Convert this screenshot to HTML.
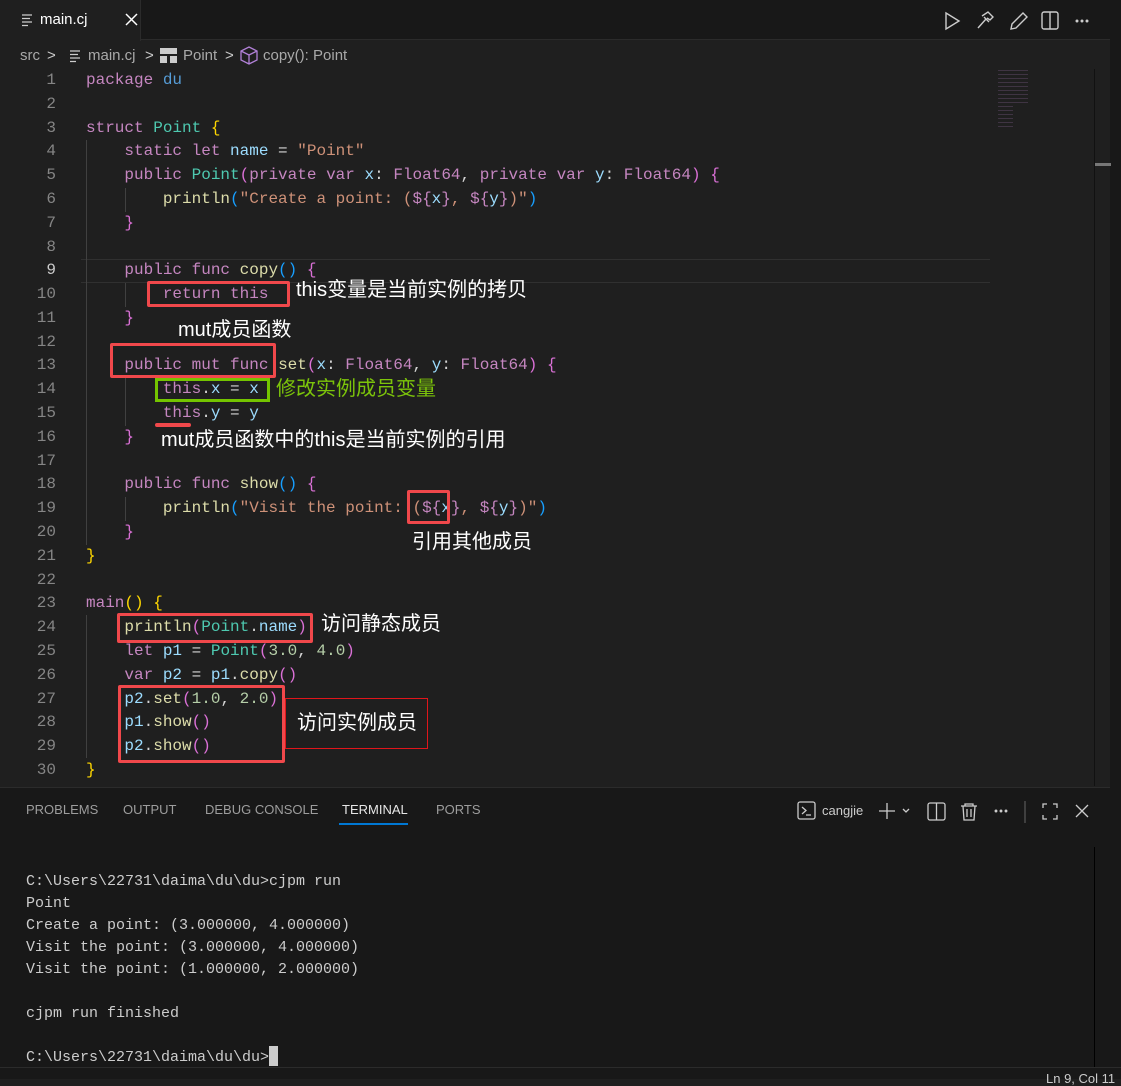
<!DOCTYPE html>
<html><head><meta charset="utf-8"><style>
*{margin:0;padding:0;box-sizing:border-box}
body{width:1121px;height:1079px;background:#1f1f1f;position:relative;overflow:hidden;font-family:"Liberation Sans",sans-serif;color:#ccc}
.abs{position:absolute}
.ln{position:absolute;left:0;width:56px;text-align:right;color:#858585;font-size:16px;font-family:"Liberation Mono",monospace;height:24px;line-height:24px}
.cl{position:absolute;left:86px;white-space:pre;font-size:16px;font-family:"Liberation Mono",monospace;height:24px;line-height:24px;color:#d4d4d4}
.k{color:#c586c0}.t{color:#4ec9b0}.v{color:#9cdcfe}.s{color:#ce9178}.f{color:#dcdcaa}.y{color:#ffd700}.p{color:#da70d6}.b{color:#179fff}.n{color:#b5cea8}.ty{color:#c586c0}
.box{position:absolute;border:3px solid #f0484b;border-radius:2px}
.ann{position:absolute;color:#fff;font-size:20px;font-family:"Liberation Sans","Noto Sans CJK SC",sans-serif;white-space:nowrap;line-height:24px}
.g{position:absolute;width:1px;background:#404040}
.tab{position:absolute;top:802px;font-size:13px;color:#9d9d9d}
.term{position:absolute;left:26px;font-size:15px;font-family:"Liberation Mono",monospace;color:#ccc;white-space:pre;line-height:22px}
.bc{position:absolute;top:47px;font-size:15px;color:#a9a9a9;white-space:nowrap;line-height:18px}
</style></head><body>
<div class="abs" style="left:0;top:0;width:1121px;height:40px;background:#181818;border-bottom:1px solid #2b2b2b"></div>
<div class="abs" style="left:0;top:0;width:141px;height:41px;background:#1f1f1f;border-right:1px solid #2b2b2b"></div>
<svg class="abs" style="left:21px;top:13px" width="14" height="14" stroke="#ccc" stroke-width="1.2"><path d="M1 2H11M1 5.5H9M1 9H11M1 12.5H7"/></svg>
<div class="abs" style="left:40px;top:11px;font-size:15px;color:#fff">main.cj</div>
<svg class="abs" style="left:124px;top:12px" width="16" height="16" stroke="#fff" stroke-width="1.5"><path d="M2 2L13 13M13 2L2 13"/></svg>
<svg class="abs" style="left:940px;top:8px" width="160" height="26" fill="none" stroke="#ccc" stroke-width="1.4">
<path d="M6 5 L19 13 L6 21 Z"/>
<path d="M38 20 L46 11 M42 8 L48 4 L53 9 L50 12 L47 10 M44 9 L49 14"/>
<path d="M71 21 L72 16 L83 5 L87 9 L76 20 Z"/>
<rect x="102" y="4" width="16" height="17" rx="2"/><path d="M110 4 V21"/>
<circle cx="137" cy="13" r=".8" fill="#ccc"/><circle cx="142" cy="13" r=".8" fill="#ccc"/><circle cx="147" cy="13" r=".8" fill="#ccc"/>
</svg>
<div class="abs" style="left:1110px;top:0;width:11px;height:1079px;background:#181818"></div>
<!-- breadcrumb -->
<div class="bc" style="left:20px">src</div>
<div class="bc" style="left:47px;color:#ccc">&gt;</div>
<svg class="abs" style="left:69px;top:49px" width="14" height="14" stroke="#ccc" stroke-width="1.2"><path d="M1 2H11M1 5.5H9M1 9H11M1 12.5H7"/></svg>
<div class="bc" style="left:88px">main.cj</div>
<div class="bc" style="left:145px;color:#ccc">&gt;</div>
<svg class="abs" style="left:159px;top:47px" width="20" height="18"><rect x="1" y="1" width="17" height="6" fill="#ccc"/><rect x="1" y="9" width="7" height="7" fill="#ccc"/><rect x="11" y="9" width="7" height="7" fill="#ccc"/></svg>
<div class="bc" style="left:183px">Point</div>
<div class="bc" style="left:225px;color:#ccc">&gt;</div>
<svg class="abs" style="left:240px;top:46px" width="20" height="20" fill="none" stroke="#b180d7" stroke-width="1.3"><path d="M9 1 L17 5 V14 L9 18 L1 14 V5 Z M1 5 L9 9 L17 5 M9 9 V18"/></svg>
<div class="bc" style="left:263px">copy(): Point</div>
<!-- scrollbar -->
<div class="abs" style="left:1094px;top:69px;width:1px;height:717px;background:#111"></div>
<div class="abs" style="left:1095px;top:163px;width:16px;height:3px;background:#777"></div>
<div class="abs" style="left:998px;top:70px;width:50px;height:60px;opacity:.35;background:repeating-linear-gradient(#7a5a86 0 1px,transparent 1px 4px);clip-path:polygon(0 0,60% 0,60% 60%,30% 60%,30% 100%,0 100%)"></div>
<div class="abs" style="left:81px;top:259px;width:909px;height:24px;border-top:1px solid #303030;border-bottom:1px solid #303030"></div>
<div class="g" style="left:86px;top:140px;height:405px"></div>
<div class="g" style="left:125px;top:188px;height:24px"></div>
<div class="g" style="left:125px;top:283px;height:24px"></div>
<div class="g" style="left:125px;top:378px;height:48px"></div>
<div class="g" style="left:125px;top:497px;height:24px"></div>
<div class="g" style="left:86px;top:615px;height:143px"></div>

<div class="ln" style="top:68px">1</div><div class="cl" style="top:68px"><span class="k">package</span> <span class="v" style="color:#569cd6">du</span></div>
<div class="ln" style="top:92px">2</div>
<div class="ln" style="top:116px">3</div><div class="cl" style="top:116px"><span class="k">struct</span> <span class="t">Point</span> <span class="y">{</span></div>
<div class="ln" style="top:139px">4</div><div class="cl" style="top:139px">    <span class="k">static</span> <span class="k">let</span> <span class="v">name</span> = <span class="s">"Point"</span></div>
<div class="ln" style="top:163px">5</div><div class="cl" style="top:163px">    <span class="k">public</span> <span class="t">Point</span><span class="p">(</span><span class="k">private</span> <span class="k">var</span> <span class="v">x</span>: <span class="ty">Float64</span>, <span class="k">private</span> <span class="k">var</span> <span class="v">y</span>: <span class="ty">Float64</span><span class="p">)</span> <span class="p">{</span></div>
<div class="ln" style="top:187px">6</div><div class="cl" style="top:187px">        <span class="f">println</span><span class="b">(</span><span class="s">"Create a point: (</span><span class="k">${</span><span class="v">x</span><span class="k">}</span><span class="s">, </span><span class="k">${</span><span class="v">y</span><span class="k">}</span><span class="s">)"</span><span class="b">)</span></div>
<div class="ln" style="top:211px">7</div><div class="cl" style="top:211px">    <span class="p">}</span></div>
<div class="ln" style="top:235px">8</div>
<div class="ln" style="top:258px;color:#ccc">9</div><div class="cl" style="top:258px">    <span class="k">public</span> <span class="k">func</span> <span class="f">copy</span><span class="b">()</span> <span class="p">{</span></div>
<div class="ln" style="top:282px">10</div><div class="cl" style="top:282px">        <span class="k">return</span> <span class="k">this</span></div>
<div class="ln" style="top:306px">11</div><div class="cl" style="top:306px">    <span class="p">}</span></div>
<div class="ln" style="top:330px">12</div>
<div class="ln" style="top:353px">13</div><div class="cl" style="top:353px">    <span class="k">public</span> <span class="k">mut</span> <span class="k">func</span> <span class="f">set</span><span class="p">(</span><span class="v">x</span>: <span class="ty">Float64</span>, <span class="v">y</span>: <span class="ty">Float64</span><span class="p">)</span> <span class="p">{</span></div>
<div class="ln" style="top:377px">14</div><div class="cl" style="top:377px">        <span class="k">this</span>.<span class="v">x</span> = <span class="v">x</span></div>
<div class="ln" style="top:401px">15</div><div class="cl" style="top:401px">        <span class="k">this</span>.<span class="v">y</span> = <span class="v">y</span></div>
<div class="ln" style="top:425px">16</div><div class="cl" style="top:425px">    <span class="p">}</span></div>
<div class="ln" style="top:449px">17</div>
<div class="ln" style="top:472px">18</div><div class="cl" style="top:472px">    <span class="k">public</span> <span class="k">func</span> <span class="f">show</span><span class="b">()</span> <span class="p">{</span></div>
<div class="ln" style="top:496px">19</div><div class="cl" style="top:496px">        <span class="f">println</span><span class="b">(</span><span class="s">"Visit the point: (</span><span class="k">${</span><span class="v">x</span><span class="k">}</span><span class="s">, </span><span class="k">${</span><span class="v">y</span><span class="k">}</span><span class="s">)"</span><span class="b">)</span></div>
<div class="ln" style="top:520px">20</div><div class="cl" style="top:520px">    <span class="p">}</span></div>
<div class="ln" style="top:544px">21</div><div class="cl" style="top:544px"><span class="y">}</span></div>
<div class="ln" style="top:568px">22</div>
<div class="ln" style="top:591px">23</div><div class="cl" style="top:591px"><span class="k">main</span><span class="y">()</span> <span class="y">{</span></div>
<div class="ln" style="top:615px">24</div><div class="cl" style="top:615px">    <span class="f">println</span><span class="p">(</span><span class="t">Point</span>.<span class="v">name</span><span class="p">)</span></div>
<div class="ln" style="top:639px">25</div><div class="cl" style="top:639px">    <span class="k">let</span> <span class="v">p1</span> = <span class="t">Point</span><span class="p">(</span><span class="n">3.0</span>, <span class="n">4.0</span><span class="p">)</span></div>
<div class="ln" style="top:663px">26</div><div class="cl" style="top:663px">    <span class="k">var</span> <span class="v">p2</span> = <span class="v">p1</span>.<span class="f">copy</span><span class="p">()</span></div>
<div class="ln" style="top:687px">27</div><div class="cl" style="top:687px">    <span class="v">p2</span>.<span class="f">set</span><span class="p">(</span><span class="n">1.0</span>, <span class="n">2.0</span><span class="p">)</span></div>
<div class="ln" style="top:710px">28</div><div class="cl" style="top:710px">    <span class="v">p1</span>.<span class="f">show</span><span class="p">()</span></div>
<div class="ln" style="top:734px">29</div><div class="cl" style="top:734px">    <span class="v">p2</span>.<span class="f">show</span><span class="p">()</span></div>
<div class="ln" style="top:758px">30</div><div class="cl" style="top:758px"><span class="y">}</span></div>

<div class="box" style="left:147px;top:281px;width:143px;height:26px"></div>
<div class="ann" style="left:296px;top:278px">this变量是当前实例的拷贝</div>
<div class="ann" style="left:178px;top:318px">mut成员函数</div>
<div class="box" style="left:110px;top:343px;width:166px;height:35px"></div>
<div class="abs" style="left:155px;top:378px;width:115px;height:24px;border:3px solid #74c400"></div>
<div class="ann" style="left:276px;top:377px;color:#7cc40a">修改实例成员变量</div>
<div class="abs" style="left:155px;top:423px;width:36px;height:4px;background:#f0484b;border-radius:2px"></div>
<div class="ann" style="left:161px;top:428px">mut成员函数中的this是当前实例的引用</div>
<div class="box" style="left:407px;top:490px;width:43px;height:34px"></div>
<div class="ann" style="left:412px;top:530px">引用其他成员</div>
<div class="box" style="left:117px;top:613px;width:196px;height:30px"></div>
<div class="ann" style="left:321px;top:612px">访问静态成员</div>
<div class="box" style="left:118px;top:685px;width:167px;height:78px"></div>
<div class="abs" style="left:285px;top:698px;width:143px;height:51px;border:1px solid #e0161b"></div>
<div class="ann" style="left:297px;top:711px">访问实例成员</div>

<div class="abs" style="left:0;top:787px;width:1110px;height:292px;background:#181818;border-top:1px solid #2b2b2b"></div>
<div class="tab" style="left:26px">PROBLEMS</div>
<div class="tab" style="left:123px">OUTPUT</div>
<div class="tab" style="left:205px">DEBUG CONSOLE</div>
<div class="tab" style="left:342px;color:#e7e7e7">TERMINAL</div>
<div class="abs" style="left:339px;top:823px;width:69px;height:2px;background:#0078d4"></div>
<div class="tab" style="left:436px">PORTS</div>
<svg class="abs" style="left:795px;top:799px" width="300" height="26" fill="none" stroke="#ccc" stroke-width="1.3">
<rect x="3" y="3" width="17" height="17" rx="2"/><path d="M7 8 L11 11.5 L7 15 M11 16 H16"/>
<path d="M92 4 V20 M84 12 H100 M108 10 L111 13 L114 10"/>
<rect x="133" y="4" width="17" height="17" rx="2"/><path d="M141.5 4 V21"/>
<path d="M166 7 H182 M170 7 V5 H178 V7 M168 7 L169 21 H179 L180 7 M172 10 V18 M176 10 V18"/>
<circle cx="201" cy="12" r=".8" fill="#ccc"/><circle cx="206" cy="12" r=".8" fill="#ccc"/><circle cx="211" cy="12" r=".8" fill="#ccc"/>
<path d="M230 2 V24" stroke="#555"/>
<path d="M248 9 V5 H252 M258 5 H262 V9 M262 16 V20 H258 M252 20 H248 V16"/>
<path d="M281 6 L293 18 M293 6 L281 18"/>
</svg>
<div class="abs" style="left:822px;top:803px;font-size:13px;color:#ccc">cangjie</div>
<div class="abs" style="left:1094px;top:847px;width:1px;height:220px;background:#000"></div>
<div class="term" style="top:871px">C:\Users\22731\daima\du\du&gt;cjpm run
Point
Create a point: (3.000000, 4.000000)
Visit the point: (3.000000, 4.000000)
Visit the point: (1.000000, 2.000000)

cjpm run finished

C:\Users\22731\daima\du\du&gt;</div>
<div class="abs" style="left:269px;top:1046px;width:9px;height:20px;background:#ccc"></div>
<div class="abs" style="left:0;top:1067px;width:1121px;height:12px;background:#181818;border-top:1px solid #2b2b2b"></div>
<div class="abs" style="left:1046px;top:1071px;font-size:13px;color:#ccc;white-space:nowrap">Ln 9, Col 11</div>
</body></html>
